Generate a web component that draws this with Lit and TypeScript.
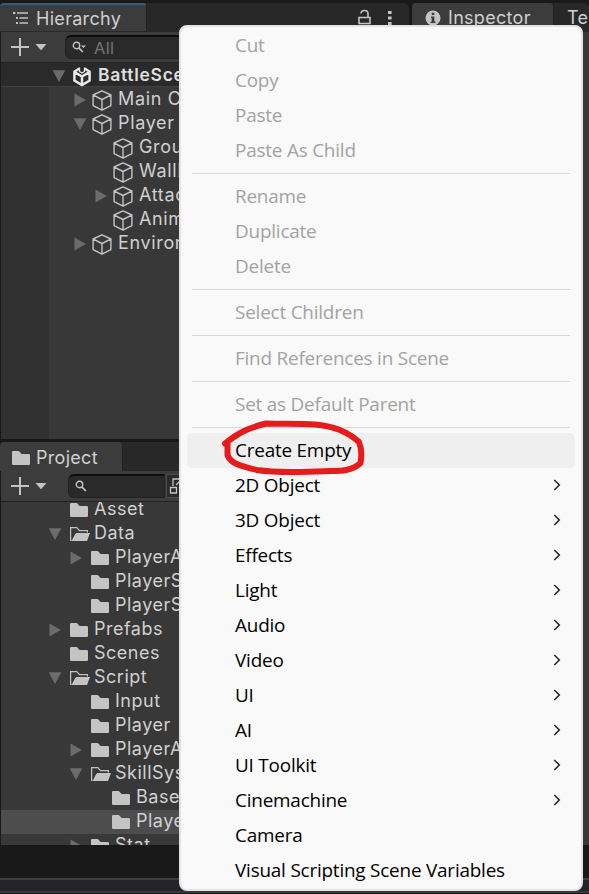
import { LitElement, html, css, svg, nothing } from "lit";
import { customElement } from "lit/decorators.js";
import { classMap } from "lit/directives/class-map.js";

type Fold = "open" | "closed" | "none";
interface TreeItem { label: string; level: number; fold: Fold; icon: string; bold?: boolean; selected?: boolean; }
interface MenuItem { label: string; disabled?: boolean; sub?: boolean; hover?: boolean; }

const t = (label: string, level: number, fold: Fold, icon: string, extra = {}): TreeItem => ({ label, level, fold, icon, ...extra });

const HIERARCHY: TreeItem[] = [
  t("Main Camera", 1, "closed", "cube"),
  t("Player", 1, "open", "cube"),
  t("Ground", 2, "none", "cube"),
  t("WallD", 2, "none", "cube"),
  t("Attack", 2, "closed", "cube"),
  t("Animator", 2, "none", "cube"),
  t("Environment", 1, "closed", "cube"),
];
const PROJECT: TreeItem[] = [
  t("Asset", 0, "none", "folder"),
  t("Data", 0, "open", "folderOpen"),
  t("PlayerA", 1, "closed", "folder"),
  t("PlayerS", 1, "none", "folder"),
  t("PlayerS", 1, "none", "folder"),
  t("Prefabs", 0, "closed", "folder"),
  t("Scenes", 0, "none", "folder"),
  t("Script", 0, "open", "folderOpen"),
  t("Input", 1, "none", "folder"),
  t("Player", 1, "none", "folder"),
  t("PlayerA", 1, "closed", "folder"),
  t("SkillSystem", 1, "open", "folderOpen"),
  t("Base", 2, "none", "folder"),
  t("Player", 2, "none", "folder", { selected: true }),
  t("Stat", 1, "closed", "folder"),
];
const off = (label: string): MenuItem => ({ label, disabled: true });
const sub = (label: string): MenuItem => ({ label, sub: true });
const MENU: MenuItem[][] = [
  ["Cut", "Copy", "Paste", "Paste As Child"].map(off),
  ["Rename", "Duplicate", "Delete"].map(off),
  [off("Select Children")],
  [off("Find References in Scene")],
  [off("Set as Default Parent")],
  [
    { label: "Create Empty", hover: true },
    ...["2D Object", "3D Object", "Effects", "Light", "Audio", "Video", "UI", "AI", "UI Toolkit", "Cinemachine"].map(sub),
    { label: "Camera" },
    { label: "Visual Scripting Scene Variables" },
  ],
];

const ICONS: Record<string, unknown> = {
  cube: svg`<path d="M10 .9 18.9 5v10.6L10 20.1 1.1 15.600V5ZM1.300 5.200 10 9.500l8.700-4.300M10 9.500V20" fill="none" stroke="#c4c4c4" stroke-width="1.400" stroke-linejoin="round"/>`,
  folder: svg`<path d="M1 4.200Q1 3 2.200 3h5.600l2.900 3H17.800Q19 6 19 7.200v8.600Q19 17 17.800 17H2.200Q1 17 1 15.800Z" fill="#c4c4c4"/>`,
  folderOpen: svg`<path d="M2.500 16.400H1.600V3.700h6.200l2.700 2.900h7.900v2" fill="none" stroke="#c4c4c4" stroke-width="1.200"/><path d="M7.300 9H21l-3 8H2.600L5.600 11Z" fill="#c4c4c4"/>`,
  unity: svg`<path d="m7.400 2.500-5 3.200v8.600M2.400 11.500v3L10 19l7.600-4.500v-3M12.600 2.500l5 3.200v8.600M10 19v-8.500M10 10.500 3 6.400M10 10.500l7-4.100" fill="none" stroke="#e8e8e8" stroke-width="2.500"/><path d="M7.500 1.500v4L10 7l2.500-1.500v-4" fill="none" stroke="#e8e8e8" stroke-width="1.300"/>`,
};
const icon = (name: string) => html`<svg class="icon" width="20" height="21" viewBox="0 0 20 21">${ICONS[name]}</svg>`;

@customElement("editor-tree-row")
class EditorTreeRow extends LitElement {
  static properties = { item: { attribute: false } };
  declare item: TreeItem;
  static styles = css`
    :host { display: block; }
    .row { display: flex; align-items: center; height: 24px; box-sizing: border-box; padding-left: var(--row-pad, 0); padding-bottom: var(--row-lift, 0); color: #d0d0d0; font: 18px Inter, "Liberation Sans", sans-serif; letter-spacing: var(--track, 0.65px); white-space: nowrap; }
    .selected { background: #4d4d4d; }
    .bold { font-weight: 600; font-size: 17.5px; letter-spacing: 0.7px; color: #dedede; }
    .indent { flex: none; }
    .fold { flex: none; width: 14px; height: 14px; margin-right: var(--fold-gap, 5px); position: relative; top: 1px; }
    .icon { flex: none; margin-right: var(--icon-gap, 6px); overflow: visible; position: relative; top: 1px; }
    .label { line-height: 22px; padding-bottom: 1px; }
  `;
  render() {
    const { label, level, fold, icon: name, bold, selected } = this.item;
    return html`<div class=${classMap({ row: true, bold: !!bold, selected: !!selected })}>
      <span class="indent" style="width:${level * 21}px"></span>
      <svg class="fold" viewBox="0 0 14 14">
        ${fold === "open" ? svg`<path d="M.7 1.200h12.600L7 13Z" fill="#6c6c6c"/>` : fold === "closed" ? svg`<path d="M1.500 .5v13L12.800 7Z" fill="#6c6c6c"/>` : nothing}
      </svg>
      ${icon(name)}<span class="label">${label}</span>
    </div>`;
  }
}

@customElement("context-menu")
class ContextMenu extends LitElement {
  static styles = css`
    :host { display: block; box-sizing: border-box; border: 2px solid #e3e3e3; border-radius: 8px; background: #f9f9f9; padding: 1px 6px; letter-spacing: -0.2px; }
    .item { display: flex; align-items: center; justify-content: space-between; height: 35px; padding: 0 14px 0 48px; border-radius: 5px; color: #000; font: 400 18.9px "Open Sans", "Noto Sans", sans-serif; white-space: nowrap; }
    .disabled { color: #a3a3a3; }
    .hover { background: #efefef; }
    .separator { height: 1px; margin: 5px; background: #d7d7d7; }
    .label { line-height: 35px; }
    .chevron { margin-bottom: 1px; }
  `;
  render() {
    return MENU.map((group, i) => html`
      ${i ? html`<div class="separator"></div>` : nothing}
      ${group.map((m) => html`<div class=${classMap({ item: true, disabled: !!m.disabled, hover: !!m.hover })}>
        <span class="label">${m.label}</span>
        ${m.sub ? html`<svg class="chevron" width="8" height="12" viewBox="0 0 8 12"><path d="m1.300 1 5 5-5 5" fill="none" stroke="#222" stroke-width="1.500"/></svg>` : nothing}
      </div>`)}`);
  }
}

@customElement("app-root")
class AppRoot extends LitElement {
  static styles = css`
    :host { display: block; position: relative; width: 589px; height: 894px; overflow: hidden; background: #191919; color: #d0d0d0; font: 18px Inter, "Liberation Sans", sans-serif; letter-spacing: 0.3px; }
    .workspace { display: grid; grid-template-columns: 409px 177px; column-gap: 3px; height: 845px; padding-top: 3px; box-sizing: border-box; }
    .left { display: flex; flex-direction: column; }
    .tabs { display: flex; align-items: stretch; height: 29px; background: #282828; border-radius: 5px 5px 0 0; box-sizing: border-box; }
    .tab { display: flex; flex: none; align-items: center; box-sizing: border-box; background: #3c3c3c; border-radius: 4px 4px 0 0; border-right: 1px solid #222; white-space: nowrap; }
    .tab svg { flex: none; }
    .tab.hier { width: 147px; height: 28px; border-top: 2px solid #2c5d87; padding-left: 12px; gap: 7px; }
    .tab.proj { width: 123px; padding: 2px 0 0 12px; gap: 6px; }
    .tools { display: flex; align-items: center; margin: 0 17px 0 auto; gap: 17px; }
    .toolbar { display: flex; align-items: center; flex: none; height: 31px; box-sizing: border-box; background: #3c3c3c; border-bottom: 1px solid #232323; margin-left: 1px; padding-left: 10px; }
    .search { display: flex; align-items: center; box-sizing: border-box; height: 24px; background: #2a2a2a; border: 1px solid #212121; border-top: 2px solid #0d0d0d; border-radius: 6px; color: #747474; font-size: 16.500px; }
    .search.wide { margin-left: 18px; width: 320px; padding-left: 6px; gap: 7px; }
    .search.short { margin-left: 21px; width: 97px; padding-left: 6px; border-radius: 6px 0 0 6px; }
    .filter { display: flex; align-items: center; height: 24px; width: 30px; margin-left: 1px; background: #2a2a2a; border: 1px solid #4a4a4a; box-sizing: border-box; }
    .scene { --fold-gap: 6px; --icon-gap: 6px; flex: none; background: #2a2a2a; height: 24px; padding-left: 51px; margin-left: 1px; border-bottom: 1px solid #404040; box-sizing: border-box; }
    .tree { --fold-gap: 5px; --icon-gap: 6px; height: 352px; margin-left: 1px; box-sizing: border-box; padding-left: 51px; background: linear-gradient(90deg, #313131 48px, #383838 48px); }
    .project { margin-top: 3px; }
    .files { --row-pad: 47px; --row-lift: 2px; --track: 0.5px; --fold-gap: 7px; --icon-gap: 5px; height: 343px; margin-left: 1px; overflow: hidden; background: #383838; }
    .files-inner { margin-top: -4px; }
    .right { display: flex; flex-direction: column; }
    .tab.inspector { width: 142px; padding-left: 13px; gap: 7px; }
    .tab.next { background: none; border: 0; padding-left: 13px; }
    .panel { flex: 1; background: #383838; }
    .status { height: 49px; box-sizing: border-box; padding-top: 33px; }
    .bar { height: 11px; border-top: 2px solid #3e3e41; background: #22242a; border-bottom: 2px solid #38383a; }
    .menu { position: absolute; left: 179px; top: 25px; width: 404px; height: 866px; }
    .mark { position: absolute; left: 215px; top: 415px; }
  `;
  addIcon() {
    return html`<svg width="36" height="20" viewBox="0 0 36 20"><path d="M0 10h18M9 1v18" stroke="#c4c4c4" stroke-width="2"/><path d="M24.500 7h11L30 13.300Z" fill="#c4c4c4"/></svg>`;
  }
  magnifier(arrow: boolean) {
    return html`<svg width="15" height="13" viewBox="0 0 15 13"><circle cx="4.500" cy="4.500" r="3.200" fill="none" stroke="#c4c4c4" stroke-width="1.400"/><path d="m6.800 6.800 4 4.200" stroke="#c4c4c4" stroke-width="1.700"/>${arrow ? svg`<path d="M9 4.500h5L11.500 7Z" fill="#c4c4c4"/>` : nothing}</svg>`;
  }
  render() {
    return html`
      <div class="workspace">
        <div class="left">
          <div class="tabs">
            <div class="tab hier">
              <svg width="17" height="14" viewBox="0 0 17 14"><path d="M1 2h2.500M5 2h11M4 7h2M7.500 7H16M4 12h2M7.500 12H16" stroke="#c4c4c4" stroke-width="1.400"/><path d="M1 1h2v2H1ZM4 6h1.600v2H4ZM4 11h1.600v2H4Z" fill="#c4c4c4"/></svg>
              <span>Hierarchy</span>
            </div>
            <div class="tools">
              <svg width="13" height="17" viewBox="0 0 13 17"><path d="M3 4.500Q3 1.500 6.500 1.500T10 4.500V8M1 8.500h11v6H1Z" fill="none" stroke="#c4c4c4" stroke-width="1.600"/></svg>
              <svg width="4" height="16" viewBox="0 0 4 16"><path d="M0 1h3.600v3H0ZM0 6.500h3.600v3H0ZM0 12h3.600v3H0Z" fill="#c4c4c4"/></svg>
            </div>
          </div>
          <div class="toolbar">${this.addIcon()}<div class="search wide">${this.magnifier(true)}<span>All</span></div></div>
          <div class="scene"><editor-tree-row .item=${t("BattleScene", 0, "open", "unity", { bold: true })}></editor-tree-row></div>
          <div class="tree">${HIERARCHY.map((item) => html`<editor-tree-row .item=${item}></editor-tree-row>`)}</div>
          <div class="project">
            <div class="tabs">
              <div class="tab proj">
                <svg width="18" height="14" viewBox="1 3 18 14">${ICONS.folder}</svg>
                <span>Project</span>
              </div>
            </div>
            <div class="toolbar">${this.addIcon()}<div class="search short">${this.magnifier(false)}</div>
              <div class="filter"><svg width="20" height="20" viewBox="0 0 20 20"><path d="M6 10V3h11M3.500 11.500h6v5.500h-6Z" fill="none" stroke="#c4c4c4" stroke-width="1.300"/><path d="m9 9 5-5" stroke="#c4c4c4" stroke-width="1.300"/></svg></div>
            </div>
            <div class="files"><div class="files-inner">${PROJECT.map((item) => html`<editor-tree-row .item=${item}></editor-tree-row>`)}</div></div>
          </div>
        </div>
        <div class="right">
          <div class="tabs">
            <div class="tab inspector">
              <svg width="16" height="16" viewBox="0 0 16 16"><circle cx="8" cy="8" r="7.500" fill="#c4c4c4"/><path d="M6.700 2.800h2.600v2.300H6.700ZM6 6.500h3.300v5H10.500V13H5.700v-1.500h1V8H6Z" fill="#3c3c3c"/></svg>
              <span>Inspector</span>
            </div>
            <div class="tab next">Te</div>
          </div>
          <div class="panel"></div>
        </div>
      </div>
      <div class="status"><div class="bar"></div></div>
      <context-menu class="menu"></context-menu>
      <svg class="mark" width="160" height="70" viewBox="215 415 160 70"><path d="M225 443.500C238 433 248 428 266 423.500C285 424 300 423.500 315 424.500C336 426 349 433 359 442C363 452 361 458 360.500 463C352 471 341 471 330 471C306 472 280 473.500 257 470C240 466 230 463 227.500 455V442" fill="none" stroke="#e51b1c" stroke-width="6" stroke-linecap="round" stroke-linejoin="round"/></svg>`;
  }
}
